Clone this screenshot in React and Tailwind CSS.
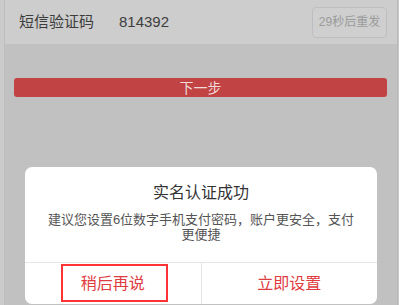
export default function App() {
  return (
    <div
      className="relative flex h-[305px] w-[399px] overflow-hidden bg-[#c1c1c1]"
      style={{ fontFamily: '"Liberation Sans", "Noto Sans CJK SC", sans-serif' }}
    >
      {/* left edge */}
      <div className="w-[5px] shrink-0 border-r border-[#bdbdbd] bg-[#cbcbcb]" />

      {/* page */}
      <div className="flex flex-1 flex-col">
        <div className="flex h-[44px] items-center bg-[#cdcdcd] pl-[14px] pr-[10px]">
          <span className="w-[100px] text-[15px] text-[#3d3d3d]">短信验证码</span>
          <span className="text-[15px] text-[#3d3d3d]">814392</span>
          <button className="ml-auto flex h-[31px] w-[75px] items-center justify-center rounded-[4px] border border-[#bebebe] bg-[#cfcfcf] text-[12px] text-[#9b9b9b]">
            29秒后重发
          </button>
        </div>

        <div className="ml-[9px] mr-[10px] mt-[34px] flex h-[19px] items-center justify-center rounded-[3px] bg-[#c14343] text-[14px] leading-none text-[#f1dada]">
          下一步
        </div>
      </div>

      {/* right edge */}
      <div className="w-[2px] shrink-0 border-l border-[#b8b8b8] bg-[#c9c9c9]" />

      {/* dialog */}
      <div className="absolute left-[25px] top-[167px] flex h-[137px] w-[352px] flex-col rounded-[7px] bg-white">
        <div className="pt-[14px] text-center text-[16px] leading-[24px] text-[#333333]">实名认证成功</div>
        <p className="mt-[7px] px-[12px] text-center text-[13px] leading-[15px] text-[#555555]">
          建议您设置6位数字手机支付密码，账户更安全，支付
          <br />
          更便捷
        </p>
        <div className="mt-auto flex h-[42px] border-t border-[#e6e6e6]">
          <div className="flex flex-1 items-center justify-center border-r border-[#e6e6e6] text-[16px] text-[#e03c3f]">
            稍后再说
          </div>
          <div className="flex flex-1 items-center justify-center text-[16px] text-[#e03c3f]">立即设置</div>
        </div>

        {/* annotation box */}
        <div className="absolute left-[36px] top-[97px] h-[38px] w-[107px] border-2 border-[#ff3333]" />
      </div>
    </div>
  );
}
